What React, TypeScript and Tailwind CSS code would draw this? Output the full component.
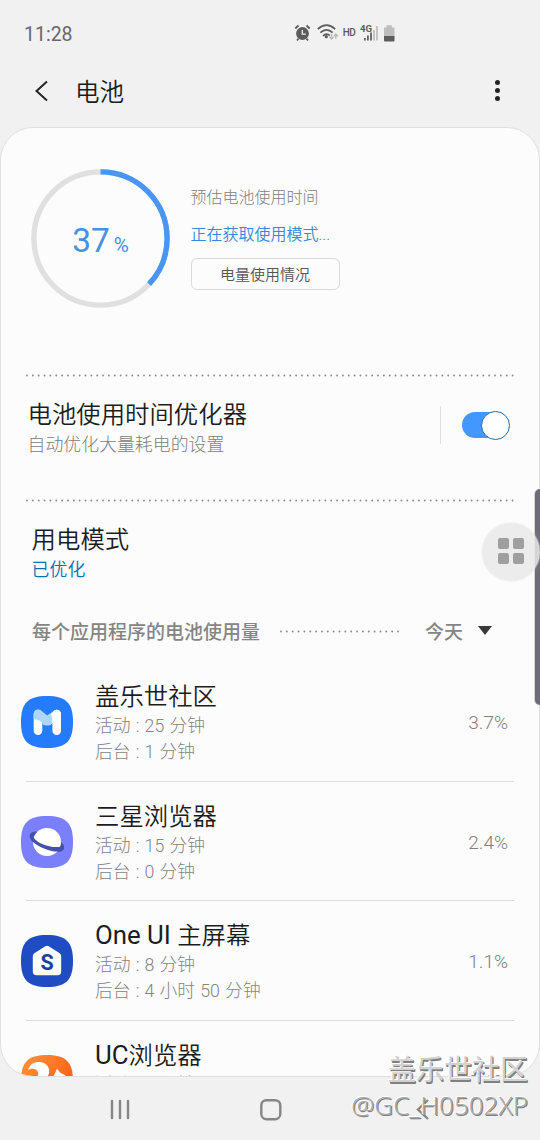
import type { ReactNode } from 'react';

function DottedRule({ width, className }: { width: number; className?: string }) {
  return (
    <svg width={width} height="3" className={className}>
      <line x1="1" y1="1.5" x2={width - 1} y2="1.5" stroke="#8a8a8a" strokeWidth="1.9" strokeLinecap="round" strokeDasharray="0 5.85" />
    </svg>
  );
}

const squircle = 'M26 0C45 0 52 7 52 26S45 52 26 52S0 45 0 26S7 0 26 0Z';

function CommunityIcon() {
  return (
    <svg width="52" height="52" viewBox="0 0 52 52">
      <path d={squircle} fill="#257bfd" />
      <path d="M17 18V34.8M35.7 18V34.8" stroke="#fff" strokeWidth="8.6" strokeLinecap="round" />
      <path d="M35.7 18L27.5 25" stroke="#fff" strokeWidth="8.6" strokeLinecap="round" />
      <path d="M12.7 18C12.7 14 16.8 12.4 20 14.6L26.2 19.6L29.3 17.2C31.5 20 31.5 23.5 31 27C29 30.2 24 30 22 28.4C21.3 25.5 17.5 23.4 12.7 23.2Z" fill="#abd7fe" />
    </svg>
  );
}

function PlanetIcon() {
  return (
    <svg width="52" height="52" viewBox="0 0 52 52">
      <path d={squircle} fill="#7a80fc" />
      <path d="M15 15.6C7.5 15.6 7 21.5 11.5 25.5C18 32 33 37.5 41 35C44.5 33.5 43.5 28.5 40 26Z" fill="#454fb0" />
      <circle cx="26" cy="26" r="14" fill="#fff" />
      <path d="M12.5 19C10.6 24.8 29 33.5 39.9 30.4C41 31.5 42 33 41 35C33 37.5 18 32 11.5 25.5C8.5 22 9.5 19.5 12.5 19Z" fill="#454fb0" />
    </svg>
  );
}

function HomeAppIcon() {
  return (
    <svg width="52" height="52" viewBox="0 0 52 52">
      <path d={squircle} fill="#1f4cc3" />
      <path d="M24.3 11.3Q26 10.2 27.7 11.3L38.7 18.2Q40.2 19.2 40.2 21V36.5Q40.2 40.3 36.4 40.3H15.6Q11.8 40.3 11.8 36.5V21Q11.8 19.2 13.3 18.2Z" fill="#fff" />
      <text x="26" y="35.2" textAnchor="middle" fontFamily="Roboto" fontWeight="700" fontSize="21.5" fill="#1b419c">S</text>
    </svg>
  );
}

function SquirrelIcon() {
  return (
    <svg width="52" height="52" viewBox="0 0 52 52">
      <defs>
        <linearGradient id="flame" x1="0" y1="0" x2="1" y2="0.6">
          <stop offset="0" stopColor="#ff9438" />
          <stop offset="1" stopColor="#ff5f18" />
        </linearGradient>
      </defs>
      <path d={squircle} fill="url(#flame)" />
      <path d="M7 15C9 9 13 7 18 7C25 7 29 12 28 18C27.5 21 25 23 23 26H13C16 22 18 20 17 17C15.5 13 10 13 7 15Z" fill="#fff" />
      <path d="M31 26C32 21 34 19 36 13.5L39.5 18L44 20L48 26Z" fill="#fff" />
    </svg>
  );
}

type AppUsage = { latin?: string; name: string; active: string; background: string; percent: string; icon: ReactNode };

const apps: AppUsage[] = [
  { name: '盖乐世社区', active: '25 分钟', background: '1 分钟', percent: '3.7%', icon: <CommunityIcon /> },
  { name: '三星浏览器', active: '15 分钟', background: '0 分钟', percent: '2.4%', icon: <PlanetIcon /> },
  { latin: 'One UI ', name: '主屏幕', active: '8 分钟', background: '4 小时 50 分钟', percent: '1.1%', icon: <HomeAppIcon /> },
  { latin: 'UC', name: '浏览器', active: '2 分钟', background: '3 分钟', percent: '0.6%', icon: <SquirrelIcon /> },
];

function AppRow({ app }: { app: AppUsage }) {
  return (
    <div className="flex h-[119.5px] shrink-0 pl-5">
      <div className="w-[74px] shrink-0 pt-[34px]">{app.icon}</div>
      <div className="mr-[26px] flex-1">
        <div className="h-[51px] pt-[18px] text-[24.4px] leading-[34px] font-[350] whitespace-pre text-[#1c1c1c]">
          {app.latin && <span className="text-[25.8px] leading-none font-normal">{app.latin}</span>}
          {app.name}
        </div>
        <div className="text-[17.8px] leading-[26px] font-light text-[#858585] [word-spacing:0.8px]">活动 : {app.active}</div>
        <div className="text-[17.8px] leading-[26px] font-light text-[#858585] [word-spacing:0.8px]">后台 : {app.background}</div>
      </div>
      <div className="pt-[48px] pr-[31px] text-[19px] leading-[26px] font-light text-[#808080]">{app.percent}</div>
    </div>
  );
}

function StatusIcons() {
  return (
    <svg width="106" height="22" viewBox="292 22.5 106 22" fill="none">
      <circle cx="302.5" cy="33" r="6.4" fill="#5c5c5c" />
      <path d="M302.3 29.5V33.7H305.8" stroke="#f1f1f1" strokeWidth="1.3" />
      <path d="M295.3 28L298.5 25M309.7 28L306.5 25M298.5 38L297 40M306.5 38L308 40" stroke="#5c5c5c" strokeWidth="1.8" />
      <path d="M317.8 28.6Q326.5 20.8 335.2 28.6M320.3 32.2Q326.5 26.4 332.7 32.2M323 35.4Q326.5 32 329.8 35" stroke="#5c5c5c" strokeWidth="1.7" />
      <circle cx="326.3" cy="36.2" r="1.6" fill="#5c5c5c" />
      <path d="M331.5 33.5V38M329.3 36.3L331.5 38.6L333.7 36.3M335.8 38.5V34M333.8 35.8L335.8 33.5L337.8 35.8" stroke="#b9b9b9" strokeWidth="1.3" />
      <text x="342.8" y="35.7" fontFamily="Roboto" fontWeight="500" fontSize="10" fill="#5c5c5c" textLength="13">HD</text>
      <text x="360" y="31.7" fontFamily="Roboto" fontWeight="700" fontSize="9.6" fill="#5c5c5c" textLength="12">4G</text>
      <path d="M364.9 40V37.5M367.9 40V35M371 40V32" stroke="#5c5c5c" strokeWidth="1.7" />
      <path d="M374 40V29.5M377 40V25.5" stroke="#c0c0c0" strokeWidth="1.8" />
      <path d="M384 36V27H386.5V24.8H391.8V27H394.5V36Z" fill="#bdbdbd" />
      <path d="M384 35.5H394.5V40Q394.5 41 393.5 41H385Q384 41 384 40Z" fill="#5c5c5c" />
    </svg>
  );
}

export default function App() {
  return (
    <div className="relative flex h-[1140px] w-[540px] flex-col overflow-hidden bg-[#f1f1f1] font-['Roboto','Noto_Sans_CJK_SC',sans-serif]">
      <header className="flex h-[54px] items-center pt-[13px] pl-6">
        <span className="w-[268px] pt-[2px] text-[19.5px] leading-none text-[#686868]">11:28</span>
        <StatusIcons />
      </header>
      <div className="flex h-[73px] items-center">
        <svg width="75" height="73" fill="none">
          <path d="M47 27.5L36.5 37L47 46.5" stroke="#252525" strokeWidth="2" />
        </svg>
        <h1 className="flex-1 pt-[4px] text-[24.5px] leading-8 font-[350] text-[#1c1c1c]">电池</h1>
        <div className="mr-10 flex flex-col gap-[3px]">
          <i className="size-[5px] rounded-full bg-[#252525]" />
          <i className="size-[5px] rounded-full bg-[#252525]" />
          <i className="size-[5px] rounded-full bg-[#252525]" />
        </div>
      </div>

      <main className="flex h-[950px] shrink-0 flex-col overflow-hidden rounded-[33px] border border-[#e0e0e0] bg-[#fcfcfc]">
        <section className="flex h-[246px] shrink-0 pt-[41px] pl-[30px]">
          <div className="grid size-[139px] place-items-center">
            <svg width="139" height="139" viewBox="0 0 139 139" fill="none" className="col-start-1 row-start-1">
              <circle cx="69.5" cy="69.5" r="66.6" stroke="#e0e0e0" strokeWidth="5.4" />
              <circle cx="69.5" cy="69.5" r="66.6" stroke="#4896f2" strokeWidth="5.4" pathLength="100" strokeDasharray="37 63" transform="rotate(-90 69.5 69.5)" />
            </svg>
            <div className="col-start-1 row-start-1 flex items-baseline gap-[4px] pt-[5px] text-[#4a90e2]">
              <span className="text-[33.5px] leading-none">37</span>
              <span className="text-[20.5px] leading-none">%</span>
            </div>
          </div>
          <div className="flex flex-col pt-[15.5px] pl-[20.5px]">
            <div className="text-[16px] leading-[26px] font-light text-[#808080]">预估电池使用时间</div>
            <div className="mt-[11px] text-[16px] leading-[26px] font-[350] text-[#3a86d8]">正在获取使用模式...</div>
            <button className="mt-[10.5px] h-8 w-[149px] rounded-[6px] border-[1.5px] border-[#dadada] pt-[2px] text-[15px] leading-none font-[350] text-[#555]">电量使用情况</button>
          </div>
        </section>

        <DottedRule width={489} className="ml-[25px] shrink-0" />
        <section className="flex h-[122px] shrink-0 pl-[26.5px]">
          <div className="w-[412.5px] pt-[20.5px]">
            <div className="text-[24.4px] leading-[34px] font-[350] text-[#1c1c1c]">电池使用时间优化器</div>
            <div className="text-[17.9px] leading-[26px] font-light text-[#808080]">自动优化大量耗电的设置</div>
          </div>
          <div className="mt-[29px] h-[38px] w-px bg-[#dedede]" />
          <div className="mt-[33.5px] ml-[21px] flex h-[29px] w-12 items-center">
            <div className="flex h-[25.5px] w-[43px] items-center rounded-full bg-[#4298ff]">
              <div className="ml-[19px] size-[29px] shrink-0 rounded-full border-[1.4px] border-[#1a6bb0] bg-white" />
            </div>
          </div>
        </section>

        <DottedRule width={489} className="ml-[25px] shrink-0" />
        <section className="h-[104px] shrink-0 pt-[20.5px] pl-[30.6px]">
          <div className="text-[24.4px] leading-[34px] font-[350] text-[#1c1c1c]">用电模式</div>
          <div className="text-[17.9px] leading-[26px] font-[350] text-[#0b6fb4]">已优化</div>
        </section>
        <section className="flex h-[56px] shrink-0 items-start pl-[31px] text-[19px] leading-[26px] font-medium text-[#858585]">
          <span className="w-[248px] pt-[14px]">每个应用程序的电池使用量</span>
          <DottedRule width={124} className="mt-[24px]" />
          <span className="w-[54px] pt-[14px] pl-[21px] whitespace-nowrap">今天</span>
          <svg width="14" height="9" className="mt-[20px] ml-[20px]">
            <path d="M0 0H14L7 9Z" fill="#383838" />
          </svg>
        </section>

        {apps.map((app, index) => (
          <div key={app.name} className="shrink-0">
            {index > 0 && <div className="mx-[25px] -mt-px h-px bg-[#dcdcdc]" />}
            <AppRow app={app} />
          </div>
        ))}
      </main>

      <nav className="h-[63px] shrink-0">
        <svg width="540" height="63" fill="none" stroke="#868686" strokeWidth="2.4">
          <path d="M112 24V41M120 24V41M128 24V41" strokeLinecap="round" />
          <rect x="261.3" y="23.2" width="19" height="19" rx="5.2" />
          <path d="M428 23L418 32.5L428 42" />
        </svg>
      </nav>

      <div className="absolute top-[489px] right-0 h-[216px] w-[5px] rounded-l-[5px] bg-[#6e6c79] shadow-[-1px_0_0_#d5d5d8]" />
      <div className="absolute top-[523px] left-[482px] size-[58px] rounded-full bg-[#e9e9e9]/85 shadow-[0_0_2px_#e2e2e2]">
        <div className="grid grid-cols-[11px_11px] gap-[4px] pt-[15px] pl-[16px]">
          <i className="size-[11px] rounded-[2px] bg-[#9f9f9f]" />
          <i className="size-[11px] rounded-[2px] bg-[#9f9f9f]" />
          <i className="size-[11px] rounded-[2px] bg-[#9f9f9f]" />
          <i className="size-[11px] rounded-[2px] bg-[#9f9f9f]" />
        </div>
      </div>
      <div className="absolute top-[1051px] right-[12px] text-right font-['Noto_Sans','Noto_Sans_CJK_SC',sans-serif] whitespace-nowrap">
        <div className="text-[28px] leading-[36px] text-[#d2d2d2] [text-shadow:-1px_-1px_0_#fff,1px_1px_0_#808080,1px_1.5px_0_#808080]">盖乐世社区</div>
        <div className="text-[26px] leading-[36px] font-light text-[#a8a8a8] [text-shadow:-1px_-1px_0_#fff,1px_1px_0_#808080]">@GC_H0502XP</div>
      </div>
    </div>
  );
}
